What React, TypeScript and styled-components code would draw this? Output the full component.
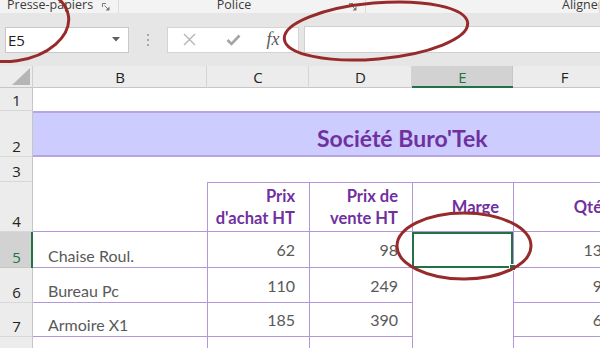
import React from 'react';
import styled, { createGlobalStyle } from 'styled-components';

const PURPLE_LINE = '#b197d9';
const PURPLE_TEXT = '#7030a0';
const GREEN = '#217346';
const MARK = '#972a2a';

const GlobalStyle = createGlobalStyle`
    html, body {
        margin: 0;
        padding: 0;
        background: #ffffff;
    }
    body {
        overflow: hidden;
    }
`;

const Window = styled.div`
    position: relative;
    width: 600px;
    height: 348px;
    overflow: hidden;
    font-family: "Open Sans", "Noto Sans", sans-serif;
`;

/**
 * Ribbon group names (only the bottom of the ribbon is visible)
 */
const GroupLabels = styled.div`
    display: flex;
    height: 13px;
    background: #f3f3f3;
    overflow: hidden;
`;

const Group = styled.div<{ $width?: number }>`
    display: flex;
    align-items: flex-start;
    box-sizing: border-box;
    min-width: 0;
    overflow: hidden;
    ${(p) => (p.$width ? `width: ${p.$width}px; flex-shrink: 0;` : 'flex: 1;')}
    border-right: 1px solid #dcdcdc;
`;

const GroupName = styled.span<{ $indent?: number; $center?: boolean }>`
    margin-top: -1px;
    padding-left: ${(p) => p.$indent || 0}px;
    font-size: 12.5px;
    line-height: 12px;
    color: #3b3b3b;
    white-space: nowrap;
    ${(p) => (p.$center ? 'flex: 1; text-align: center;' : '')}
`;

const Launcher = styled.svg`
    margin: 3px 8px 0 auto;
    flex-shrink: 0;
`;

/**
 * Name box + formula bar
 */
const FormulaBand = styled.div`
    display: flex;
    align-items: center;
    height: 53px;
    padding-left: 5px;
    background: #e6e6e6;
`;

const NameBox = styled.div`
    display: flex;
    align-items: center;
    justify-content: space-between;
    box-sizing: border-box;
    width: 124px;
    height: 26px;
    padding: 0 8px 0 2px;
    background: #ffffff;
    border: 1px solid #c8c8c8;
    font-size: 15px;
    color: #222222;
`;

const Grip = styled.div`
    display: flex;
    flex-direction: column;
    align-items: center;
    gap: 3px;
    width: 38px;
`;

const GripDot = styled.span`
    width: 2px;
    height: 2px;
    background: #a8a8a8;
`;

const FormulaButtons = styled.div`
    display: grid;
    grid-template-columns: 42px 46px 1fr;
    align-items: center;
    justify-items: center;
    box-sizing: border-box;
    width: 132px;
    height: 26px;
    background: #ffffff;
    border: 1px solid #d4d4d4;
`;

const Fx = styled.span`
    font-family: "Liberation Serif", "DejaVu Serif", serif;
    font-style: italic;
    font-size: 18px;
    color: #5a5a5a;
    margin-right: 8px;
`;

const FormulaInput = styled.div`
    flex: 1;
    box-sizing: border-box;
    height: 27px;
    margin-left: 5px;
    background: #ffffff;
    border: 1px solid #d0d0d0;
    border-right: none;
`;

/**
 * Worksheet grid
 */
const Sheet = styled.div`
    display: grid;
    grid-template-columns: 33px 174px 102px 103px 101px 103px;
    grid-template-rows: 22px 23px 46px 25px 50px 36px 35px 34px 30px;
    font-family: Lato, "Noto Sans", sans-serif;
`;

const Corner = styled.div`
    background: #ececec;
    box-shadow: inset -1px 0 0 #cfcfcf, inset 0 -1px 0 #c6c6c6;
`;

const ColHead = styled.div<{ $active?: boolean }>`
    display: flex;
    align-items: center;
    justify-content: center;
    font-family: "Open Sans", "Noto Sans", sans-serif;
    font-size: 15px;
    color: ${(p) => (p.$active ? GREEN : '#222222')};
    background: ${(p) => (p.$active ? '#d2d2d2' : '#ececec')};
    box-shadow: ${(p) => (p.$active
        ? `inset 0 -2px 0 ${GREEN}, inset -1px 0 0 #c6c6c6`
        : 'inset -1px 0 0 #d4d4d4, inset 0 -1px 0 #c6c6c6')};
`;

const RowHead = styled.div<{ $active?: boolean }>`
    display: flex;
    align-items: flex-end;
    justify-content: center;
    padding-bottom: 1px;
    font-family: "Open Sans", "Noto Sans", sans-serif;
    font-size: 15px;
    line-height: 20px;
    color: ${(p) => (p.$active ? GREEN : '#222222')};
    background: ${(p) => (p.$active ? '#d2d2d2' : '#ececec')};
    box-shadow: ${(p) => (p.$active
        ? `inset -2px 0 0 ${GREEN}, inset 0 -1px 0 #c6c6c6`
        : 'inset -1px 0 0 #c6c6c6, inset 0 -1px 0 #d8d8d8')};
`;

interface ICellProps {
    $top?: boolean;
    $bottom?: boolean;
    $left?: boolean;
    $right?: boolean;
    $middle?: boolean;
    $span?: string;
}

const edges = (p: ICellProps) => {
    const list: string[] = [];
    if (p.$top) { list.push(`inset 0 1px 0 ${PURPLE_LINE}`); }
    if (p.$bottom) { list.push(`inset 0 -1px 0 ${PURPLE_LINE}`); }
    if (p.$left) { list.push(`inset 1px 0 0 ${PURPLE_LINE}`); }
    return list.length ? list.join(', ') : 'none';
};

const Cell = styled.div<ICellProps>`
    display: flex;
    align-items: ${(p) => (p.$middle ? 'center' : 'flex-end')};
    justify-content: ${(p) => (p.$right ? 'flex-end' : 'flex-start')};
    padding: ${(p) => (p.$middle ? '0 14px 0 15px' : '0 14px 3px 15px')};
    box-shadow: ${edges};
    font-size: 16px;
    line-height: 1.2;
    color: #595959;
    white-space: nowrap;
    ${(p) => (p.$span ? `grid-column: ${p.$span};` : '')}
`;

const TitleBand = styled.div`
    grid-column: 2 / -1;
    display: flex;
    align-items: flex-end;
    padding: 0 0 5px 284px;
    background: #ccccff;
    box-shadow: inset 0 2px 0 #b8a4e4, inset 0 -2px 0 #b8a4e4;
    font-size: 23px;
    font-weight: 700;
    color: ${PURPLE_TEXT};
    white-space: nowrap;
`;

const HeadCell = styled(Cell)`
    text-align: right;
    font-size: 16.5px;
    font-weight: 700;
    line-height: 22px;
    color: ${PURPLE_TEXT};
`;

const ActiveCell = styled.div`
    position: relative;
    box-shadow: inset 0 0 0 2px ${GREEN}, inset 1px 0 0 ${PURPLE_LINE};
    &::after {
        content: '';
        position: absolute;
        right: -3px;
        bottom: -3px;
        width: 5px;
        height: 5px;
        background: ${GREEN};
        border: 1px solid #ffffff;
    }
`;

const Marks = styled.svg`
    position: absolute;
    left: 0;
    top: 0;
    pointer-events: none;
`;

const rows = [
    { n: 5, label: 'Chaise Roul.', buy: 62, sell: 98, qty: 13 },
    { n: 6, label: 'Bureau Pc', buy: 110, sell: 249, qty: 9 },
    { n: 7, label: 'Armoire X1', buy: 185, sell: 390, qty: 6 },
];

const LauncherIcon = () => (
    <Launcher width="8" height="8" viewBox="0 0 8 8">
        <polyline points="0.5,4 0.5,0.5 4,0.5" fill="none" stroke="#7a7a7a" strokeWidth="1" />
        <line x1="2.5" y1="2.5" x2="6.5" y2="6.5" stroke="#7a7a7a" strokeWidth="1" />
        <polygon points="7.5,3.5 7.5,7.5 3.5,7.5" fill="#7a7a7a" />
    </Launcher>
);

const App = () => (
    <Window>
        <GlobalStyle />
        <GroupLabels>
            <Group $width={119}>
                <GroupName $indent={7}>Presse-papiers</GroupName>
                <LauncherIcon />
            </Group>
            <Group $width={247}>
                <GroupName $center={true}>Police</GroupName>
                <LauncherIcon />
            </Group>
            <Group>
                <GroupName $indent={196}>Alignement</GroupName>
            </Group>
        </GroupLabels>

        <FormulaBand>
            <NameBox>
                E5
                <svg width="8" height="5" viewBox="0 0 8 5">
                    <polygon points="0,0 8,0 4,4.5" fill="#5f5f5f" />
                </svg>
            </NameBox>
            <Grip>
                <GripDot />
                <GripDot />
                <GripDot />
            </Grip>
            <FormulaButtons>
                <svg width="13" height="13" viewBox="0 0 13 13">
                    <path d="M1 1 L12 12 M12 1 L1 12" stroke="#b4b4b4" strokeWidth="1.4" />
                </svg>
                <svg width="15" height="12" viewBox="0 0 15 12">
                    <path d="M1.5 6 L5.5 10 L13.5 1.5" fill="none" stroke="#a4a4a4" strokeWidth="2.6" />
                </svg>
                <Fx>fx</Fx>
            </FormulaButtons>
            <FormulaInput />
        </FormulaBand>

        <Sheet>
            <Corner>
                <svg width="33" height="22" viewBox="0 0 33 22">
                    <polygon points="12,19 30,19 30,2" fill="#b5b5b5" />
                </svg>
            </Corner>
            <ColHead>B</ColHead>
            <ColHead>C</ColHead>
            <ColHead>D</ColHead>
            <ColHead $active={true}>E</ColHead>
            <ColHead>F</ColHead>

            <RowHead>1</RowHead>
            <Cell $span="2 / -1" />

            <RowHead>2</RowHead>
            <TitleBand>Société Buro'Tek</TitleBand>

            <RowHead>3</RowHead>
            <Cell $span="2 / -1" />

            <RowHead>4</RowHead>
            <Cell $bottom={true} />
            <HeadCell $top={true} $bottom={true} $left={true} $right={true} $middle={true}>
                Prix<br />d'achat HT
            </HeadCell>
            <HeadCell $top={true} $bottom={true} $left={true} $right={true} $middle={true}>
                Prix de<br />vente HT
            </HeadCell>
            <HeadCell $top={true} $bottom={true} $left={true} $right={true} $middle={true}>
                Marge
            </HeadCell>
            <HeadCell $top={true} $bottom={true} $left={true} $right={true} $middle={true}>
                Qté
            </HeadCell>

            {rows.map((r) => (
                <React.Fragment key={r.n}>
                    <RowHead $active={r.n === 5}>{r.n}</RowHead>
                    <Cell $bottom={true}>{r.label}</Cell>
                    <Cell $bottom={true} $left={true} $right={true} $middle={true}>{r.buy}</Cell>
                    <Cell $bottom={true} $left={true} $right={true} $middle={true}>{r.sell}</Cell>
                    {r.n === 5 ? <ActiveCell /> : <Cell $left={true} />}
                    <Cell $bottom={true} $left={true} $right={true} $middle={true}>{r.qty}</Cell>
                </React.Fragment>
            ))}

            <RowHead>8</RowHead>
            <Cell />
            <Cell $left={true} />
            <Cell $left={true} />
            <Cell $left={true} />
            <Cell $left={true} />
        </Sheet>

        <Marks width="600" height="348" viewBox="0 0 600 348">
            <g fill="none" stroke={MARK} strokeWidth="3">
                <ellipse cx="12" cy="24" rx="57" ry="37" transform="rotate(-8 12 24)" />
                <ellipse cx="376" cy="31" rx="92" ry="28" transform="rotate(-5 376 31)" />
                <ellipse cx="464" cy="246" rx="67" ry="33" />
            </g>
        </Marks>
    </Window>
);

export default App;
